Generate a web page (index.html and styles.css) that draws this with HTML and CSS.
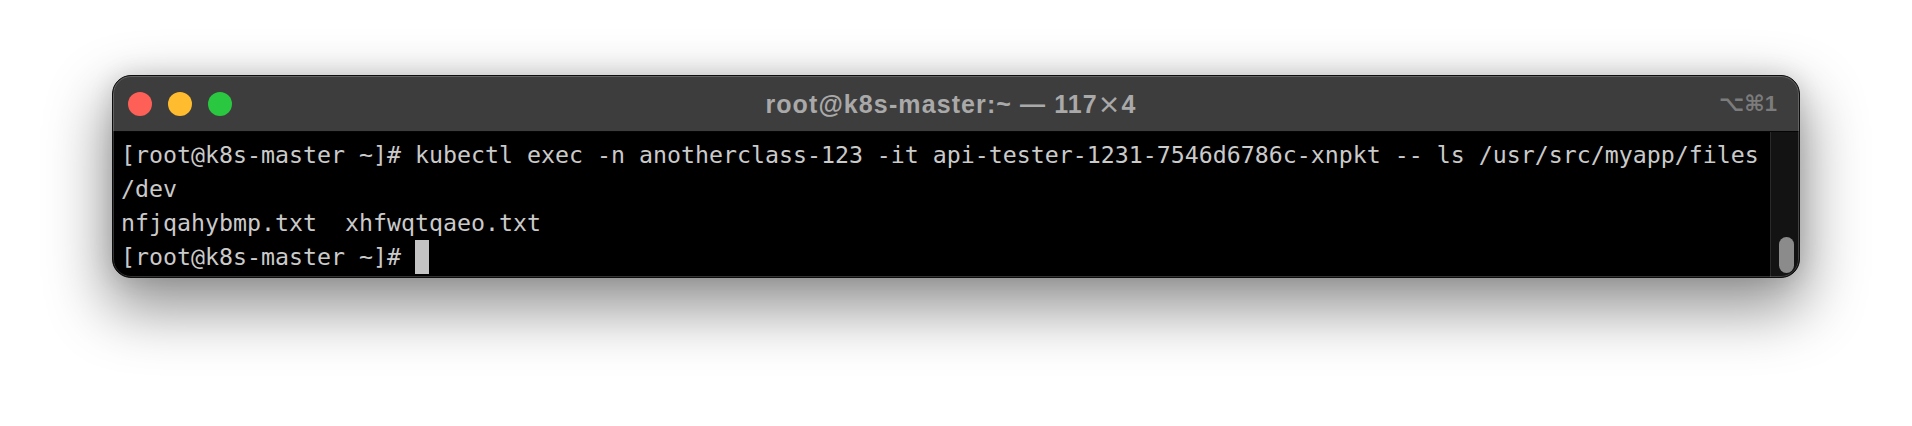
FILE: index.html
```html
<!DOCTYPE html>
<html>
<head>
<meta charset="utf-8">
<link rel="stylesheet" href="styles.css">
</head>
<body>
<div class="window">
  <div class="titlebar">
    <div class="lights">
      <span class="light red"></span>
      <span class="light yellow"></span>
      <span class="light green"></span>
    </div>
    <div class="title">root@k8s-master:~ — 117<span class="times">×</span>4</div>
    <div class="shortcut">⌥⌘1</div>
  </div>
  <div class="body">
    <div class="screen">
      <div class="line">[root@k8s-master ~]# kubectl exec -n anotherclass-123 -it api-tester-1231-7546d6786c-xnpkt -- ls /usr/src/myapp/files</div>
      <div class="line">/dev</div>
      <div class="line">nfjqahybmp.txt  xhfwqtqaeo.txt</div>
      <div class="line">[root@k8s-master ~]# <span class="cursor"> </span></div>
    </div>
    <div class="scrollbar"><div class="thumb"></div></div>
  </div>
</div>
</body>
</html>
```
FILE: styles.css
```css
html, body {
  margin: 0;
  padding: 0;
  background: #ffffff;
}
body {
  width: 1912px;
  height: 426px;
  overflow: hidden;
  padding: 75px 0 0 112px;
  box-sizing: border-box;
}
.window {
  position: relative;
  width: 1688px;
  height: 203px;
  box-sizing: border-box;
  border: 1px solid #0e0e0e;
  border-radius: 19px;
  overflow: hidden;
  display: flex;
  flex-direction: column;
  background: #000;
  box-shadow: 0 26px 60px 6px rgba(0,0,0,0.42), 0 0 24px rgba(0,0,0,0.12);
}
.window::after {
  content: "";
  position: absolute;
  inset: 0;
  border-radius: 18px;
  border: 1px solid rgba(255,255,255,0.2);
  pointer-events: none;
}
.titlebar {
  height: 55px;
  flex: none;
  background: #3d3d3d;
  border-bottom: 1px solid #050505;
  display: grid;
  grid-template-columns: 1fr auto 1fr;
  align-items: center;
  padding: 0 22px 0 15px;
}
.lights {
  display: flex;
  gap: 16px;
  align-items: center;
  margin-top: 1px;
}
.light {
  width: 24px;
  height: 24px;
  border-radius: 50%;
  display: block;
}
.red { background: #fe5f57; }
.yellow { background: #febc2e; }
.green { background: #2ac840; }
.title {
  font-family: "Liberation Sans", Arial, sans-serif;
  font-weight: bold;
  font-size: 25px;
  letter-spacing: 1.1px;
  color: #a9a9a9;
  margin-left: -3px;
}
.times {
  font-family: "DejaVu Sans", sans-serif;
  font-weight: normal;
  font-size: 27px;
}
.shortcut {
  justify-self: end;
  font-family: "Liberation Sans", "DejaVu Sans", sans-serif;
  font-weight: bold;
  font-size: 22px;
  color: #7c7c7c;
}
.body {
  flex: 1;
  min-height: 0;
  display: flex;
  background: #000;
}
.screen {
  flex: 1;
  padding: 6px 0 0 8px;
  font-family: "DejaVu Sans Mono", monospace;
  font-size: 23.25px;
  line-height: 34px;
  color: #cacaca;
}
.line {
  height: 34px;
  white-space: pre;
}
.cursor {
  display: inline-block;
  width: 14px;
  height: 34px;
  vertical-align: top;
  background: #c4c4c4;
}
.scrollbar {
  width: 29px;
  flex: none;
  background: #131313;
  border-left: 1px solid #2a2a2a;
  box-sizing: border-box;
  display: flex;
  flex-direction: column;
  justify-content: flex-end;
  padding: 0 0 4px 8px;
}
.thumb {
  width: 15px;
  height: 36px;
  border-radius: 8px;
  background: #8b8b8b;
}
```
